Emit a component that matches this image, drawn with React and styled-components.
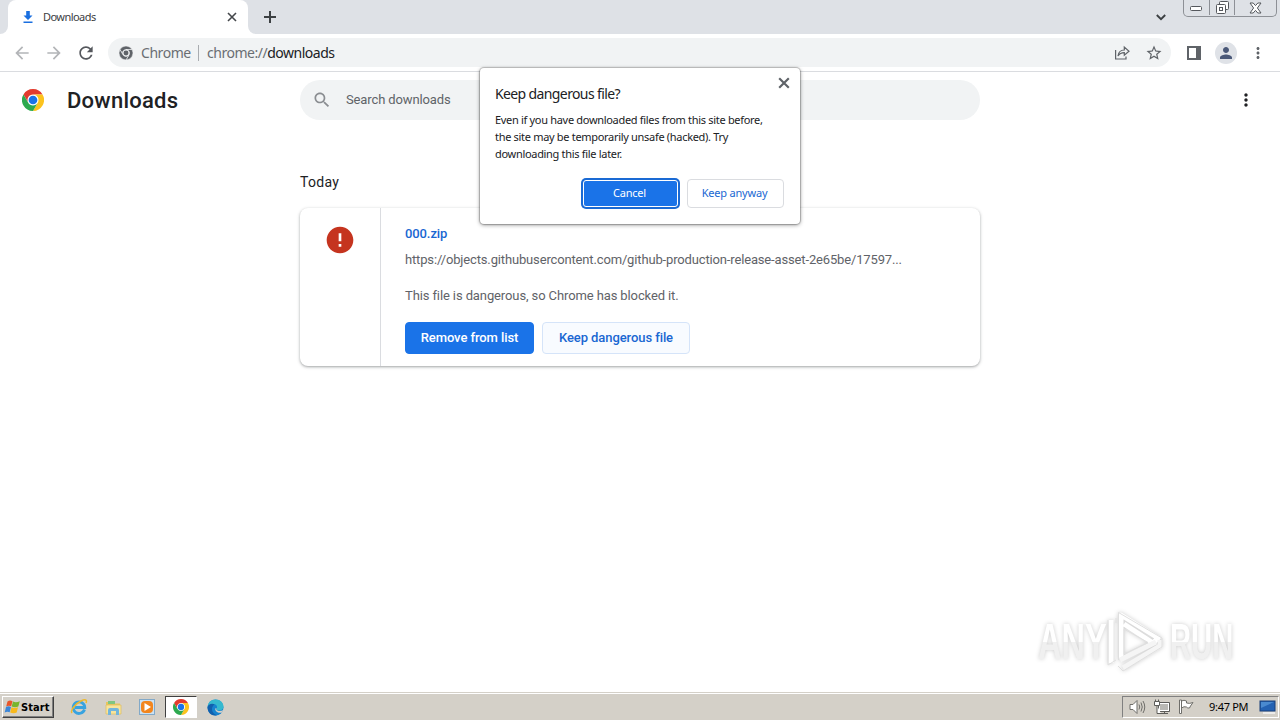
import React from "react";
import styled, { createGlobalStyle } from "styled-components";

const GlobalStyle = createGlobalStyle`
  * {
    box-sizing: border-box;
  }
  body {
    margin: 0;
    background: #fff;
    overflow: hidden;
  }
  button {
    padding: 0;
    border: none;
    background: none;
    font: inherit;
  }
  svg {
    display: block;
    flex-shrink: 0;
  }
`;

const SECTOR =
  "M24 12H44.785A24 24 0 0 0 3.215 12L13.608 30A12 12 0 0 1 24 12Z";

const ChromeLogo = ({ size }) => (
  <svg width={size} height={size} viewBox="0 0 48 48">
    <circle cx="24" cy="24" r="13" fill="#fff" />
    <path d={SECTOR} fill="#e33b2e" />
    <path d={SECTOR} fill="#fcc31e" transform="rotate(120 24 24)" />
    <path d={SECTOR} fill="#2da94f" transform="rotate(240 24 24)" />
    <circle cx="24" cy="24" r="9.5" fill="#1a73e8" />
  </svg>
);

const ChromeMono = () => (
  <svg width="14" height="14" viewBox="0 0 48 48">
    <g fill="#5f6368" stroke="#f1f3f4" strokeWidth="2">
      <path d={SECTOR} />
      <path d={SECTOR} transform="rotate(120 24 24)" />
      <path d={SECTOR} transform="rotate(240 24 24)" />
    </g>
    <circle cx="24" cy="24" r="8.5" fill="#5f6368" />
  </svg>
);

const Icon = ({ d, size = 20, color = "#5f6368" }) => (
  <svg width={size} height={size} viewBox="0 0 24 24" fill={color}>
    <path d={d} />
  </svg>
);

const paths = {
  back: "M20 11H7.83l5.59-5.59L12 4l-8 8 8 8 1.41-1.41L7.83 13H20v-2z",
  forward: "M12 4l-1.41 1.41L16.17 11H4v2h12.17l-5.58 5.59L12 20l8-8z",
  reload:
    "M17.65 6.35C16.2 4.9 14.21 4 12 4c-4.42 0-7.99 3.58-7.99 8s3.57 8 7.99 8c3.73 0 6.84-2.55 7.73-6h-2.08c-.82 2.33-3.04 4-5.65 4-3.31 0-6-2.69-6-6s2.69-6 6-6c1.66 0 3.14.69 4.22 1.78L13 11h7V4l-2.35 2.35z",
  search:
    "M15.5 14h-.79l-.28-.27C15.41 12.59 16 11.11 16 9.5 16 5.91 13.09 3 9.5 3S3 5.91 3 9.5 5.91 16 9.5 16c1.61 0 3.09-.59 4.23-1.57l.27.28v.79l5 4.99L20.49 19l-4.99-5zm-6 0C7.01 14 5 11.99 5 9.5S7.01 5 9.5 5 14 7.01 14 9.5 11.99 14 9.5 14z",
  star: "M22 9.24l-7.19-.62L12 2 9.19 8.63 2 9.24l5.46 4.73L5.82 21 12 17.27 18.18 21l-1.63-7.03L22 9.24zM12 15.4l-3.76 2.27 1-4.28-3.32-2.88 4.38-.38L12 6.1l1.71 4.04 4.38.38-3.32 2.88 1 4.28L12 15.4z",
  error:
    "M12 2C6.48 2 2 6.48 2 12s4.48 10 10 10 10-4.48 10-10S17.52 2 12 2zm1 15h-2v-2h2v2zm0-4h-2V7h2v6z",
  person:
    "M12 12c2.21 0 4-1.79 4-4s-1.79-4-4-4-4 1.79-4 4 1.79 4 4 4zm0 2c-2.67 0-8 1.34-8 4v2h16v-2c0-2.66-5.33-4-8-4z",
  dots: "M12 8c1.1 0 2-.9 2-2s-.9-2-2-2-2 .9-2 2 .9 2 2 2zm0 2c-1.1 0-2 .9-2 2s.9 2 2 2 2-.9 2-2-.9-2-2-2zm0 6c-1.1 0-2 .9-2 2s.9 2 2 2 2-.9 2-2-.9-2-2-2z",
};

const CloseIcon = ({ size, color, width = 2 }) => (
  <svg width={size} height={size} viewBox="0 0 10 10">
    <path d="M1 1L9 9M9 1L1 9" stroke={color} strokeWidth={width} fill="none" />
  </svg>
);

const WindowButtons = () => (
  <WindowControls>
    <WindowButton $width={25}>
      <svg width="13" height="6" viewBox="0 0 13 6">
        <rect x=".5" y="1.500" width="11" height="4" rx="1" fill="#fff" stroke="#55585d" />
      </svg>
    </WindowButton>
    <WindowButton $width={25}>
      <svg width="13" height="13" viewBox="0 0 13 13" fill="#fff" stroke="#55585d">
        <rect x="3.5" y=".5" width="9" height="8" rx="1" />
        <rect x=".5" y="3.5" width="9" height="9" rx="1" />
        <rect x="3.5" y="6.5" width="3" height="3" />
      </svg>
    </WindowButton>
    <WindowButton $width={42}>
      <svg width="13" height="12" viewBox="0 0 13 12">
        <path
          d="M1 1h3.2L6.5 3.6 8.8 1H12L8.4 6 12 11H8.8L6.5 8.4 4.2 11H1L4.6 6Z"
          fill="#fff"
          stroke="#55585d"
          strokeLinejoin="round"
        />
      </svg>
    </WindowButton>
  </WindowControls>
);

const Watermark = () => (
  <WatermarkBox>
    <WatermarkText $squeeze={0.65}>ANY</WatermarkText>
    <svg width="58" height="64" viewBox="0 0 58 64" fill="none" strokeLinejoin="round">
      <path d="M5 10V53" stroke="#fff" strokeWidth="5" />
      <path d="M15 48V5L52 28L47 33L18 14" stroke="#fff" strokeWidth="5" />
      <path d="M14 50L50 32M17 58L54 36V30" stroke="#f5f5f5" strokeWidth="5" />
      <path d="M2 10V55L10 50M10 8V13M12.500 50V2.500L56 28V37L17 61L12 56M18 44V19L42 32.500Z" stroke="#dfdfdf" />
    </svg>
    <WatermarkText $squeeze={0.585}>RUN</WatermarkText>
  </WatermarkBox>
);

const StartFlag = () => (
  <svg width="17" height="16" viewBox="0 0 16 16">
    <path d="M3 2.5Q5.500 .8 8 2.300L6.700 7.300Q4.300 6 1.700 7.500Z" fill="#e8562a" />
    <path d="M8.500 2.600Q11.500 4 15.300 2.300L13.800 7.500Q10.500 9 7.200 7.500Z" fill="#78b52d" />
    <path d="M1.500 8Q4 6.700 6.500 7.900L5.200 13.200Q2.700 12 .2 13.400Z" fill="#3b86d8" />
    <path d="M7 8.200Q10 9.700 13.500 8.200L12.200 13.600Q9 15 5.700 13.500Z" fill="#f8b91c" />
  </svg>
);

const ExplorerE = () => (
  <svg width="18" height="18" viewBox="0 0 18 18" fill="none">
    <path d="M14.500 11.500A5.800 5.800 0 1 1 14.800 9.500H5" stroke="#38a3e0" strokeWidth="2.800" />
    <path d="M2 15C0 12.500 5 6 11 3C15 1 17.500 1.500 16 5" stroke="#edb92e" strokeWidth="1.500" />
  </svg>
);

const FolderIcon = () => (
  <svg width="17" height="17" viewBox="0 0 17 17">
    <path d="M1 3H6L7 4.500H15V15H1Z" fill="#e9c55c" />
    <path d="M3 2H10V5H3Z" fill="#7fc681" />
    <path d="M1 6H16V15H1Z" fill="#f8e49b" stroke="#dcbd60" strokeWidth=".7" />
    <path d="M3 16V11Q3 9 5 9H12Q14 9 14 11V16H11V12H6V16Z" fill="#72b5dc" />
  </svg>
);

const PlayerIcon = () => (
  <svg width="16" height="16" viewBox="0 0 16 16">
    <rect x=".5" y=".5" width="15" height="15" fill="#cbe2f4" stroke="#82a9c8" />
    <rect x="2" y="2" width="12" height="12" rx="4" fill="#f2861e" />
    <path d="M5.500 4L12 8L5.500 12Z" fill="#fff" />
  </svg>
);

const EdgeIcon = () => (
  <svg width="17" height="17" viewBox="0 0 17 17">
    <circle cx="8.500" cy="8.500" r="8" fill="#1683cf" />
    <path d="M.6 8C1 3.500 4 .5 8.500 .5C13.500 .5 16.500 4 16.500 7.500C16.500 10 14.500 11.500 12 11.500C10 11.500 9 10.700 9.500 10C11 8 9.500 5 6.500 5C4 5 1.500 6 .6 8Z" fill="#35b9cf" />
    <path d="M6 7C3.500 10 5.500 15 10 16.300C5 17.500 .5 13.500 .5 8.500C1 5 5 4 8 5.500C7 5.500 6.500 6.200 6 7Z" fill="#1260ad" />
    <path d="M9.500 9C8.500 11 10.500 12 12.500 12Q14.500 12 16.500 11L15 13.500C11 14.500 8 12.500 8.300 9.500Z" fill="#d4d0c8" />
  </svg>
);

const TrayIcons = () => (
  <>
    <svg width="17" height="16" viewBox="0 0 17 16" fill="none" stroke="#6f6e6a">
      <path d="M1 5.500H4L8 1.500V14.500L4 10.500H1Z" fill="#fff" />
      <path d="M10 5.500Q11.500 8 10 10.500M12 3.500Q14.500 8 12 12.500M14 2Q17.500 8 14 14" />
    </svg>
    <svg width="16" height="16" viewBox="0 0 16 16" fill="#fff" stroke="#5d5c59">
      <path d="M4.500 3.500H15.500V12.500H4.500ZM7 14.500H14M10.500 12.500V14.500" />
      <path d="M6 5H14V11H6Z" fill="#b9b8b4" stroke="none" />
      <path d="M.5 2.500H5.500V6.500H.5ZM1.500 .5V2.500M4.500 .5V2.500M3 6.500V14.500H7" />
    </svg>
    <svg width="16" height="16" viewBox="0 0 16 16" fill="#fff" stroke="#6f6e6a">
      <path d="M3.500 2Q6 .5 8.500 2V4Q11.500 5 15 3.500L12.500 7L11.500 9Q9.500 9.500 8.500 8Q6 7 3.500 9Z" />
      <path d="M1.500 1H3.500V14.500H1.500Z" />
    </svg>
  </>
);

const App = () => (
  <Screen>
    <GlobalStyle />
    <TabStrip>
      <TabCorner />
      <Tab>
        <svg width="10" height="13" viewBox="0 0 10 13" fill="#1a6fe0">
          <path d="M3.200 0H6.800V4.500H9.500L5 9L.5 4.500H3.200ZM.5 10.500H9.500V12H.5Z" />
        </svg>
        <TabTitle>Downloads</TabTitle>
        <CloseIcon size={10} color="#44474b" width={1.6} />
      </Tab>
      <TabCorner $right />
      <NewTab>
        <svg width="12" height="12" viewBox="0 0 12 12">
          <path d="M6 0V12M0 6H12" stroke="#3c4043" strokeWidth="2" />
        </svg>
      </NewTab>
      <TabSearch>
        <svg width="10" height="7" viewBox="0 0 10 7" fill="none">
          <path d="M.8 1L5 5.200L9.200 1" stroke="#3c4043" strokeWidth="1.900" />
        </svg>
      </TabSearch>
      <WindowButtons />
    </TabStrip>

    <Toolbar>
      <NavButtons>
        <Icon d={paths.back} color="#b3b5b8" />
        <Icon d={paths.forward} color="#b3b5b8" />
        <Icon d={paths.reload} color="#55585d" />
      </NavButtons>
      <Omnibox>
        <ChromeMono />
        <SiteName>Chrome</SiteName>
        <Divider />
        <Address>
          chrome://<span>downloads</span>
        </Address>
        <OmniboxActions>
          <svg width="16" height="16" viewBox="0 0 16 16" fill="none" stroke="#5f6368" strokeWidth="1.200">
            <path d="M1.600 5V14H12V11.500" />
            <path d="M4 11C4.500 7 7 5 10.300 5V2L15 6.200L10.300 10.300V7.600C7.500 7.600 5.500 8.500 4 11Z" />
          </svg>
          <Icon d={paths.star} size={18} />
        </OmniboxActions>
      </Omnibox>
      <SidePanel />
      <Avatar>
        <Icon d={paths.person} size={18} color="#4a5878" />
      </Avatar>
      <Icon d={paths.dots} size={18} />
    </Toolbar>

    <PageHeader>
      <Brand>
        <ChromeLogo size={22} />
        <PageTitle>Downloads</PageTitle>
      </Brand>
      <SearchField>
        <Icon d={paths.search} color="#8a8d91" />
        <span>Search downloads</span>
      </SearchField>
      <HeaderMenu>
        <Icon d={paths.dots} color="#202124" />
      </HeaderMenu>
    </PageHeader>

    <Content>
      <DateHeading>Today</DateHeading>
      <DownloadCard>
        <FileIcon>
          <Icon d={paths.error} size={32} color="#c5341f" />
        </FileIcon>
        <Details>
          <FileName>000.zip</FileName>
          <FileUrl>
            https://objects.githubusercontent.com/github-production-release-asset-2e65be/17597...
          </FileUrl>
          <Description>This file is dangerous, so Chrome has blocked it.</Description>
          <Actions>
            <CardButton $primary>Remove from list</CardButton>
            <CardButton>Keep dangerous file</CardButton>
          </Actions>
        </Details>
      </DownloadCard>
    </Content>

    <Taskbar>
      <StartButton>
        <StartFlag />
        <span>Start</span>
      </StartButton>
      <QuickLaunch>
        <TaskItem><ExplorerE /></TaskItem>
        <TaskItem><FolderIcon /></TaskItem>
        <TaskItem><PlayerIcon /></TaskItem>
        <TaskItem $active><ChromeLogo size={16} /></TaskItem>
        <TaskItem><EdgeIcon /></TaskItem>
      </QuickLaunch>
      <Tray>
        <TrayIcons />
        <Clock>9:47 PM</Clock>
        <svg width="17" height="14" viewBox="0 0 17 14">
          <rect x="1" y="1" width="15" height="10" fill="#2462b3" stroke="#183e78" />
          <path d="M2 2H15L2 8Z" fill="#4a8ad0" />
          <path d="M4 13H16" stroke="#f5f5f5" strokeWidth="1.500" />
        </svg>
      </Tray>
    </Taskbar>

    <Dialog>
      <DialogClose>
        <CloseIcon size={12} color="#5f6368" width={1.8} />
      </DialogClose>
      <DialogTitle>Keep dangerous file?</DialogTitle>
      <DialogText>
        Even if you have downloaded files from this site before,
        <br />
        the site may be temporarily unsafe (hacked). Try
        <br />
        downloading this file later.
      </DialogText>
      <DialogActions>
        <DialogButton $primary>Cancel</DialogButton>
        <DialogButton>Keep anyway</DialogButton>
      </DialogActions>
    </Dialog>
    <Watermark />
  </Screen>
);

const uiFont = `"Noto Sans", "Open Sans", sans-serif`;

const Screen = styled.div`
  position: relative;
  display: flex;
  flex-direction: column;
  width: 1280px;
  height: 720px;
  overflow: hidden;
  background: #fff;
  font-family: Roboto, sans-serif;
  color: #202124;
`;

const TabStrip = styled.div`
  display: flex;
  height: 34px;
  background: #dee1e6;
`;

const TabCorner = styled.div`
  width: 8px;
  background: linear-gradient(#dee1e6 50%, #fff 50%);
  &::before {
    content: "";
    display: block;
    height: 34px;
    border-radius: ${({ $right }) => ($right ? "0 0 0 8px" : "0 0 8px 0")};
    background: #dee1e6;
  }
`;

const Tab = styled.div`
  display: flex;
  align-items: center;
  width: 240px;
  height: 34px;
  padding: 0 11px 0 15px;
  background: #fff;
  border-radius: 8px 8px 0 0;
`;

const TabTitle = styled.span`
  flex: 1;
  margin-left: 10px;
  font: 11px/16px ${uiFont};
  letter-spacing: -0.55px;
  color: #3c4043;
`;

const NewTab = styled.button`
  display: flex;
  align-items: center;
  margin-left: 8px;
`;

const TabSearch = styled.button`
  display: flex;
  align-items: center;
  margin-left: auto;
  margin-right: 17px;
`;

const WindowControls = styled.div`
  display: flex;
  width: 94px;
  height: 17px;
  margin-right: 3px;
  padding-bottom: 1px;
  border: 1px solid #8d9096;
  border-top: none;
  border-radius: 0 0 5px 5px;
`;

const WindowButton = styled.button`
  display: flex;
  align-items: center;
  justify-content: center;
  width: ${({ $width }) => $width}px;
  & + & {
    border-left: 1px solid #8d9096;
  }
`;

const Toolbar = styled.div`
  display: flex;
  align-items: center;
  height: 38px;
  padding: 0 13px 0 12px;
  border-bottom: 1px solid #dadce0;
`;

const NavButtons = styled.div`
  display: flex;
  gap: 12px;
  width: 96px;
`;

const Omnibox = styled.div`
  display: flex;
  align-items: center;
  width: 1063px;
  height: 29px;
  padding: 0 8px 0 11px;
  border-radius: 15px;
  background: #f1f3f4;
  font: 14px/20px ${uiFont};
  color: #6a6e73;
`;

const SiteName = styled.span`
  width: 57px;
  margin-left: 8px;
  letter-spacing: -0.45px;
`;

const Divider = styled.div`
  width: 1px;
  height: 16px;
  margin-right: 8px;
  background: #a9acb0;
`;

const Address = styled.span`
  flex: 1;
  letter-spacing: -0.48px;
  span {
    color: #202124;
  }
`;

const OmniboxActions = styled.div`
  display: flex;
  align-items: center;
  gap: 15px;
`;

const SidePanel = styled.div`
  width: 14px;
  height: 14px;
  margin-left: 16px;
  border: 2px solid #5f6368;
  border-right-width: 5px;
`;

const Avatar = styled.div`
  display: flex;
  align-items: center;
  justify-content: center;
  width: 22px;
  height: 22px;
  margin: 0 12px 0 14px;
  border-radius: 50%;
  background: #dfe2e7;
`;

const PageHeader = styled.header`
  display: flex;
  align-items: center;
  height: 56px;
`;

const Brand = styled.div`
  display: flex;
  align-items: center;
  width: 300px;
  padding-left: 22px;
`;

const PageTitle = styled.h1`
  margin: 0 0 0 23px;
  font-size: 22px;
  font-weight: 500;
  letter-spacing: 0.25px;
`;

const SearchField = styled.div`
  display: flex;
  align-items: center;
  width: 680px;
  height: 40px;
  padding-left: 12px;
  border-radius: 20px;
  background: #f1f3f4;
  font-size: 13px;
  letter-spacing: -0.12px;
  color: #5f6368;
  span {
    margin-left: 14px;
    padding-bottom: 1px;
  }
`;

const HeaderMenu = styled.button`
  margin-left: auto;
  margin-right: 24px;
`;

const Content = styled.main`
  flex: 1;
  width: 680px;
  margin-left: 300px;
`;

const DateHeading = styled.div`
  margin: 45px 0 16px;
  font-size: 14px;
  line-height: 19px;
  letter-spacing: 0.3px;
`;

const DownloadCard = styled.section`
  display: flex;
  height: 158px;
  border-radius: 8px;
  background: #fff;
  box-shadow: 0 1px 2px rgba(60, 64, 67, 0.3), 0 1px 3px 1px rgba(60, 64, 67, 0.15);
`;

const FileIcon = styled.div`
  width: 81px;
  padding: 16px 0 0 24px;
  border-right: 1px solid #dadce0;
`;

const Details = styled.div`
  flex: 1;
  padding: 16px 24px 0;
  font-size: 13px;
  line-height: 20px;
  color: #5f6368;
`;

const FileName = styled.div`
  font-weight: 500;
  letter-spacing: -0.1px;
  color: #1967d2;
`;

const FileUrl = styled.div`
  margin-top: 6px;
  letter-spacing: -0.15px;
  white-space: nowrap;
`;

const Description = styled.div`
  margin-top: 16px;
  letter-spacing: -0.11px;
`;

const Actions = styled.div`
  display: flex;
  gap: 8px;
  margin-top: 16px;
`;

const CardButton = styled.button`
  width: ${({ $primary }) => ($primary ? 129 : 148)}px;
  height: 32px;
  border: 1px solid ${({ $primary }) => ($primary ? "#1a73e8" : "#d5e4f9")};
  border-radius: 4px;
  background: ${({ $primary }) => ($primary ? "#1a73e8" : "#f8fbff")};
  color: ${({ $primary }) => ($primary ? "#fff" : "#1967d2")};
  font-size: 13px;
  font-weight: 500;
  letter-spacing: -0.08px;
`;

const Dialog = styled.div`
  position: absolute;
  top: 68px;
  left: 480px;
  width: 320px;
  height: 156px;
  padding: 16px 16px 0 15px;
  border-radius: 4px;
  background: #fff;
  box-shadow: 0 0 1px 1px rgba(0, 0, 0, 0.22), 0 1px 4px rgba(0, 0, 0, 0.4);
  font-family: ${uiFont};
`;

const DialogClose = styled.button`
  position: absolute;
  top: 9px;
  right: 10px;
`;

const DialogTitle = styled.div`
  margin-bottom: 7px;
  font-size: 14px;
  line-height: 20px;
  letter-spacing: -0.62px;
  color: #202124;
`;

const DialogText = styled.div`
  font-size: 11px;
  line-height: 17px;
  letter-spacing: -0.31px;
  white-space: nowrap;
  color: #202124;
`;

const DialogActions = styled.div`
  display: flex;
  align-items: center;
  justify-content: flex-end;
  gap: 9px;
  margin-top: 17px;
`;

const DialogButton = styled.button`
  width: ${({ $primary }) => ($primary ? 95 : 97)}px;
  height: ${({ $primary }) => ($primary ? 27 : 29)}px;
  padding: 0 2px 2px 0;
  border: 1px solid ${({ $primary }) => ($primary ? "#fff" : "#dadce0")};
  border-radius: ${({ $primary }) => ($primary ? 3 : 4)}px;
  background: ${({ $primary }) => ($primary ? "#1a73e8" : "#fff")};
  box-shadow: ${({ $primary }) => ($primary ? "0 0 0 2px #1a6ad4" : "none")};
  color: ${({ $primary }) => ($primary ? "#fff" : "#1967d2")};
  font-size: 11px;
  letter-spacing: -0.2px;
`;

const WatermarkBox = styled.div`
  position: absolute;
  top: 609px;
  left: 1038px;
  display: grid;
  grid-template-columns: 68px 64px 66px;
  align-items: center;
  height: 64px;
  filter: drop-shadow(0 0 2px rgba(0, 0, 0, 0.2));
`;

const WatermarkText = styled.span`
  width: max-content;
  font: 700 50px/66px "Liberation Sans", sans-serif;
  background: linear-gradient(#fff 50%, #f0f0f0 50%);
  -webkit-background-clip: text;
  background-clip: text;
  color: transparent;
  transform: scaleX(${({ $squeeze }) => $squeeze});
  transform-origin: left;
`;

const Taskbar = styled.footer`
  display: flex;
  height: 28px;
  padding: 3px 1px 0 2px;
  border-top: 1px solid #d4d0c8;
  box-shadow: inset 0 1px #fff;
  background: #d4d0c8;
  font-family: ${uiFont};
`;

const StartButton = styled.button`
  display: flex;
  align-items: center;
  width: 52px;
  height: 22px;
  padding-left: 1px;
  border: 1px solid;
  border-color: #fff #404040 #404040 #fff;
  box-shadow: inset -1px -1px #808080;
  font: bold 11px "DejaVu Sans Condensed", sans-serif;
  letter-spacing: 0.1px;
  color: #000;
`;

const QuickLaunch = styled.div`
  display: flex;
  margin-left: 9px;
  gap: 2px;
`;

const TaskItem = styled.div`
  display: flex;
  align-items: center;
  justify-content: center;
  width: 32px;
  height: 22px;
  background: ${({ $active }) => ($active ? "#fff" : "none")};
  border: 1px solid;
  border-color: ${({ $active }) => ($active ? "#404040 #fff #fff #404040" : "transparent")};
`;

const Tray = styled.div`
  display: flex;
  align-items: center;
  width: 157px;
  height: 22px;
  margin-left: auto;
  padding-left: 6px;
  gap: 8px;
  border: 1px solid;
  border-color: #808080 #fff #fff #808080;
`;

const Clock = styled.span`
  width: 42px;
  margin: 0 0 0 7px;
  padding-bottom: 1px;
  font-size: 11px;
  letter-spacing: -0.3px;
  white-space: nowrap;
  color: #000;
`;

export default App;
